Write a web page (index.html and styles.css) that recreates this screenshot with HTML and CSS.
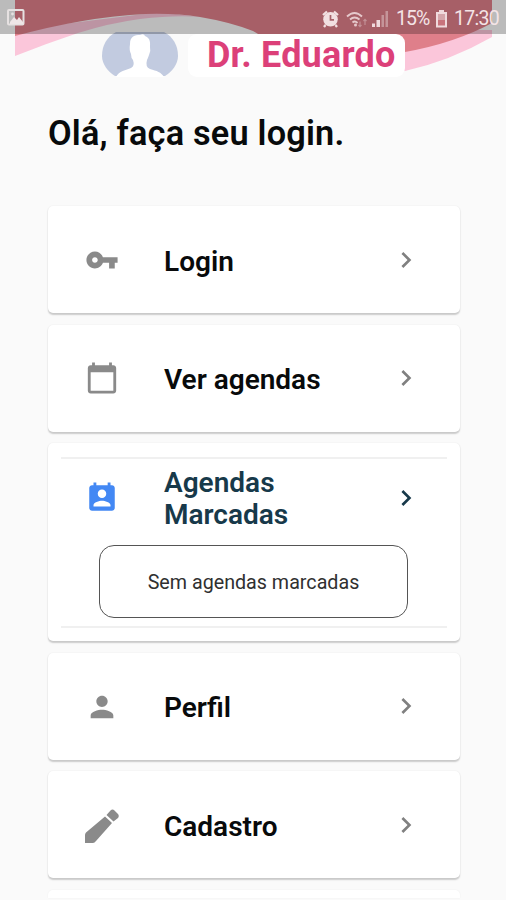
FILE: index.html
```html
<!DOCTYPE html>
<html lang="pt-BR">
<head>
<meta charset="utf-8">
<title>Dr. Eduardo</title>
<link rel="stylesheet" href="styles.css">
</head>
<body>
<div class="status">
  <svg class="status-photo" viewBox="0 0 18 17"><rect x="1" y="1" width="15.5" height="14.5" rx="1" fill="none" stroke="#e6e1e1" stroke-width="2"/><path d="M3 13l4-5 3 3 2-3 4 5v2H3z" fill="#eee6e7"/><circle cx="5.5" cy="5" r="1.4" fill="#e6e1e1"/></svg>
  <div class="status-right">
    <svg class="i-alarm" viewBox="0 0 17 18"><circle cx="8.5" cy="9.3" r="7.3" fill="#f2dfe1"/><path d="M1 5l4-3.5M16 5l-4-3.5M3.5 15l-1.5 2M13.5 15l1.5 2" stroke="#f2dfe1" stroke-width="2.3"/><path d="M8.5 5v4.8h3.5" fill="none" stroke="#a8636b" stroke-width="1.7"/></svg>
    <svg class="i-wifi" viewBox="0 0 22 18"><g fill="none" stroke="#e6c9cc" stroke-width="1.9"><path d="M1 6.5Q8.5-.5 16 6.5"/><path d="M4 9.5Q8.5 5.5 13.5 9.5"/><path d="M6.5 12.5Q9 10.5 11.5 13"/></g><circle cx="9.5" cy="15" r="1.5" fill="#e6c9cc"/><path d="M14 11.5v5M12.5 15l1.5 1.7 1.5-1.7M19 9v6M17.5 11L19 9.3l1.5 1.7" stroke="#c28f95" stroke-width="1.2" fill="none"/></svg>
    <svg class="i-signal" viewBox="0 0 18 18"><path d="M1 13.5h3V17H1zM5.5 10H9v7H5.5z" fill="#f0dadd"/><path d="M10.5 5H13v12h-2.5zM14.5 1H17v16h-2.5z" fill="#c5959a"/></svg>
    <span class="battery-text">15%</span>
    <svg class="i-battery" viewBox="0 0 13 18"><path d="M4 0h5v2h3v15.500H1V2h3z" fill="#f0dadd"/><path d="M3 4h7v6H3z" fill="#d5a6ab"/><path d="M3 10h7v5.500H3z" fill="#c8737c"/></svg>
    <span class="clock">17:30</span>
  </div>
</div>

<header class="hero">
  <svg class="wave" viewBox="0 0 506 90">
    <path d="M15 30L160 12L200 17Q175 15 140 19Q110 23 78 33Q45 44 15 56Z" fill="#fbc6da"/>
    <path d="M330 30H492V37Q450 61 405 71L330 75Z" fill="#fbc6da"/>
    <path d="M15 0H492V23Q455 43 405 52L300 60L253 31Q230 22 200 17Q175 13 145 14Q85 17 15 36Z" fill="#df7f8a"/>
  </svg>
  <div class="brand">
    <svg class="avatar" viewBox="0 0 76 46"><path d="M14 1H62C71 6 76 14 76 25C76 33 70 41 63 45H13C6 41 0 33 0 25C0 14 5 6 14 1Z" fill="#c2cbe0"/><path d="M14 46C17 40 24 39 29 37Q33 35 31 29Q29 27 29 23Q27 19 28 13C28 5 33 4 38 4Q42 2 43 5C49 7 48 13 48 16Q49 20 47 24Q46 27 45 29Q43 36 48 38C55 40 59 41 62 46Z" fill="#fff"/></svg>
    <div class="name">Dr. Eduardo</div>
  </div>
</header>

<main>
  <h1>Olá, faça seu login.</h1>
  <nav class="cards">
    <a class="card">
      <svg class="icon" viewBox="0 0 24 24"><path d="M12.650 10C11.830 7.670 9.610 6 7 6c-3.310 0-6 2.690-6 6s2.690 6 6 6c2.610 0 4.830-1.670 5.650-4H17v4h4v-4h2v-4H12.650zM7 14c-1.100 0-2-.9-2-2s.9-2 2-2 2 .9 2 2-.9 2-2 2z"/></svg>
      <span class="label">Login</span>
      <svg class="chev" viewBox="0 0 24 24"><path d="M10 6L8.590 7.410 13.170 12l-4.580 4.590L10 18l6-6z"/></svg>
    </a>
    <a class="card">
      <svg class="icon" viewBox="0 0 24 24"><path d="M20 3h-1V1h-2v2H7V1H5v2H4c-1.100 0-2 .9-2 2v16c0 1.100.9 2 2 2h16c1.100 0 2-.9 2-2V5c0-1.100-.9-2-2-2zm0 18H4V8h16v13z"/></svg>
      <span class="label">Ver agendas</span>
      <svg class="chev" viewBox="0 0 24 24"><path d="M10 6L8.590 7.410 13.170 12l-4.580 4.590L10 18l6-6z"/></svg>
    </a>
    <section class="card-open">
      <div class="panel">
        <div class="row">
          <svg class="icon blue" viewBox="0 0 24 24"><path d="M19 3h-1V1h-2v2H8V1H6v2H5c-1.110 0-2 .9-2 2v14c0 1.100.89 2 2 2h14c1.100 0 2-.9 2-2V5c0-1.100-.9-2-2-2zm-7 3c1.660 0 3 1.340 3 3s-1.340 3-3 3-3-1.340-3-3 1.340-3 3-3zm6 12H6v-1c0-2 4-3.100 6-3.100s6 1.100 6 3.100v1z"/></svg>
          <span class="label navy">Agendas Marcadas</span>
          <svg class="chev dark" viewBox="0 0 24 24"><path d="M10 6L8.590 7.410 13.170 12l-4.580 4.590L10 18l6-6z"/></svg>
        </div>
        <div class="empty">Sem agendas marcadas</div>
      </div>
    </section>
    <a class="card">
      <svg class="icon person" viewBox="0 0 24 24"><path d="M12 12c2.210 0 4-1.790 4-4s-1.790-4-4-4-4 1.790-4 4 1.790 4 4 4zm0 2c-2.670 0-8 1.340-8 4v2h16v-2c0-2.660-5.330-4-8-4z"/></svg>
      <span class="label">Perfil</span>
      <svg class="chev" viewBox="0 0 24 24"><path d="M10 6L8.590 7.410 13.170 12l-4.580 4.590L10 18l6-6z"/></svg>
    </a>
    <a class="card">
      <svg class="icon pencil" viewBox="0 0 34 34"><path d="M0 34V26Q0 24.500 1 23.500L20 7.500L27 14L11 32Q9.500 34 8 34Z M21.500 6L25.500 1.500Q27.500-.5 29.500 1.500L33 5Q34.500 7 33 9L28.500 12.500Z"/></svg>
      <span class="label">Cadastro</span>
      <svg class="chev" viewBox="0 0 24 24"><path d="M10 6L8.590 7.410 13.170 12l-4.580 4.590L10 18l6-6z"/></svg>
    </a>
    <a class="card card-peek"></a>
  </nav>
</main>
</body>
</html>
```
FILE: styles.css
```css
* { box-sizing: border-box; }
body {
  margin: 0;
  height: 900px;
  overflow: hidden;
  background: #fafafa;
  font-family: Roboto, "Liberation Sans", sans-serif;
  color: #080a0b;
}
svg { display: block; flex: none; }

.status {
  position: absolute;
  inset: 0 0 auto 0;
  z-index: 2;
  height: 34px;
  display: flex;
  justify-content: space-between;
  align-items: center;
  padding: 0 8px 0 7px;
  background: rgba(0, 0, 0, .25);
  color: #f4e4e6;
  font-size: 19.5px;
  line-height: 30px;
}
.status-photo { width: 18px; height: 17px; }
.status-right { display: flex; align-items: center; padding-top: 4px; margin-right: -1px; }
.i-alarm { width: 17px; height: 18px; margin-right: 7px; }
.i-wifi { width: 22px; height: 18px; margin-right: 3px; }
.i-signal { width: 18px; height: 18px; margin-right: 7px; }
.i-battery { width: 13px; height: 18px; margin: 0 6px; }
.battery-text { width: 33px; letter-spacing: -.9px; white-space: nowrap; }
.clock { width: 45px; letter-spacing: -.7px; white-space: nowrap; }

.hero { position: relative; height: 90px; padding: 31px 0 0 102px; }
.wave { position: absolute; inset: 0; width: 506px; height: 90px; }
.brand { position: relative; display: flex; }
.avatar { width: 76px; height: 46px; margin-right: 10px; }
.name {
  width: 217px;
  height: 43px;
  margin-top: 3px;
  padding-left: 19px;
  background: #fff;
  border-radius: 9px;
  color: #dc4079;
  font-size: 36px;
  font-weight: 700;
  line-height: 43px;
  letter-spacing: .2px;
  white-space: nowrap;
}

main { width: 412px; margin-left: 48px; }
h1 {
  margin: 0;
  height: 116px;
  padding-top: 22px;
  font-size: 34.3px;
  font-weight: 600;
  line-height: 42px;
  letter-spacing: .2px;
  white-space: nowrap;
}
.cards { display: flex; flex-direction: column; gap: 11.5px; }
.card, .card-open {
  flex: none;
  background: #fff;
  border-radius: 5px;
  box-shadow: 0 1.5px 1.5px rgba(0, 0, 0, .19), 0 0 2px rgba(0, 0, 0, .05);
}
.card { display: flex; align-items: center; height: 107px; padding: 1px 38.5px 1px 37px; }
.card-peek { height: 8px; border-radius: 5px 5px 0 0; box-shadow: 0 0 2px rgba(0, 0, 0, .05); }
.icon { width: 34px; height: 34px; fill: #8a8a8a; }
.pencil { margin-top: 3px; }
.person { margin-top: 2px; }
.label {
  flex: 1;
  margin-left: 45px;
  padding-top: 4px;
  font-size: 28px;
  font-weight: 600;
  line-height: 32px;
}
.chev { width: 32px; height: 32px; fill: #808080; }
.blue { fill: #4388f4; }
.navy { color: #17394a; }
.dark { fill: #17394a; }

.card-open { height: 198px; padding: 14px 13px 0; }
.panel {
  height: 171px;
  border-top: 2px solid #f0f0f0;
  border-bottom: 2px solid #f0f0f0;
}
.row { display: flex; align-items: center; height: 86px; padding: 0 25.5px 9px 24px; }
.row .label { padding-right: 60px; padding-top: 3px; }
.empty {
  width: 309px;
  height: 73px;
  margin-left: 38px;
  border: 1px solid #555;
  border-radius: 15px;
  text-align: center;
  font-size: 19.7px;
  font-weight: 400;
  line-height: 73px;
  color: #303030;
}
```
